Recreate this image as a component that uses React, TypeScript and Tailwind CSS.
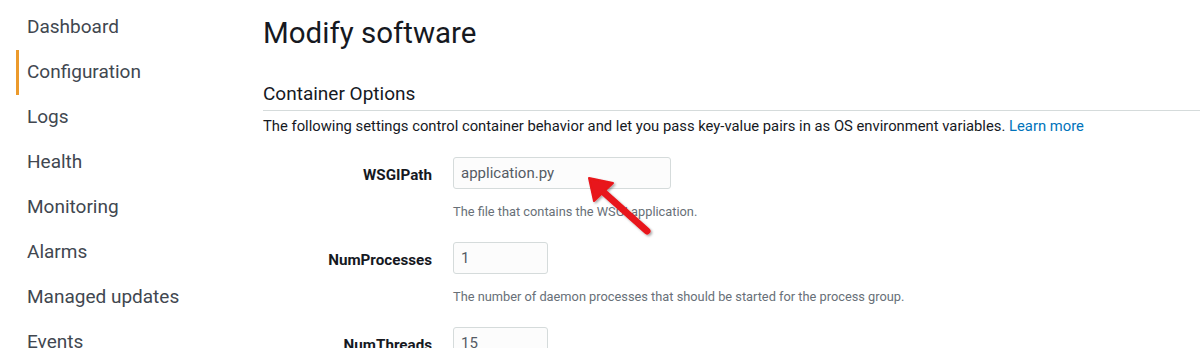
const NAV = ['Dashboard', 'Configuration', 'Logs', 'Health', 'Monitoring', 'Alarms', 'Managed updates', 'Events'];

function Field({ label, value, help, wide }: { label: string; value: string; help: string; wide?: boolean }) {
  return (
    <div className="flex">
      <div className="w-[170px] pr-[21px] pt-[7px] text-right text-[15.2px] font-bold text-[#16191f]">{label}</div>
      <div>
        <div className={`${wide ? 'w-[218px]' : 'w-[95px]'} h-[32px] rounded-[3px] border border-[#d5dbdb] bg-[#fcfcfc] px-[7px] flex items-center text-[15px] text-[#545b64]`}>
          {value}
        </div>
        <div className="mt-[16px] h-[14px] text-[12.8px] leading-[14px] text-[#687078]">{help}</div>
      </div>
    </div>
  );
}

export default function App() {
  return (
    <div className="relative flex h-[348px] w-[1200px] overflow-hidden bg-white" style={{ fontFamily: 'Roboto, "Liberation Sans", sans-serif' }}>
      {/* sidebar */}
      <nav className="w-[263px] shrink-0 pl-[16px] pt-[5px]">
        {NAV.map((n) => (
          <div
            key={n}
            className={`h-[45px] flex items-center border-l-[3px] pl-[8px] text-[19px] text-[#414750] ${n === 'Configuration' ? 'border-[#ec9a2b]' : 'border-transparent'}`}
          >
            {n}
          </div>
        ))}
      </nav>

      {/* main */}
      <main className="flex-1 pt-[13px]">
        <h1 className="text-[29.5px] leading-[40px] text-[#16191f]">Modify software</h1>
        <h2 className="mt-[29px] text-[19px] leading-[24px] text-[#16191f]">Container Options</h2>
        <div className="mt-[4px] border-t border-[#d5dbdb]" />
        <p className="mt-[5px] text-[14.8px] leading-[20px] text-[#16191f]">
          The following settings control container behavior and let you pass key-value pairs in as OS environment variables.{' '}
          <span className="text-[#0073bb]">Learn more</span>
        </p>
        <div className="ml-[20px] mt-[21px] flex flex-col gap-[23px]">
          <Field label="WSGIPath" value="application.py" help="The file that contains the WSGI application." wide />
          <Field label="NumProcesses" value="1" help="The number of daemon processes that should be started for the process group." />
          <Field label="NumThreads" value="15" help="The number of threads to be created to handle requests in each daemon process." />
        </div>
      </main>

      {/* annotation arrow */}
      <svg className="absolute left-[580px] top-[170px]" width="80" height="70" viewBox="0 0 80 70">
        <defs>
          <filter id="sh" x="-20%" y="-20%" width="140%" height="140%">
            <feDropShadow dx="1.5" dy="1.5" stdDeviation="1.2" floodColor="#000" floodOpacity="0.35" />
          </filter>
        </defs>
        <g filter="url(#sh)">
          <line x1="67" y1="61" x2="20" y2="19" stroke="#e8141a" strokeWidth="7" strokeLinecap="round" />
          <polygon points="9,8 33,13 14,31" fill="#e8141a" stroke="#e8141a" strokeWidth="2" strokeLinejoin="round" />
        </g>
      </svg>
    </div>
  );
}
